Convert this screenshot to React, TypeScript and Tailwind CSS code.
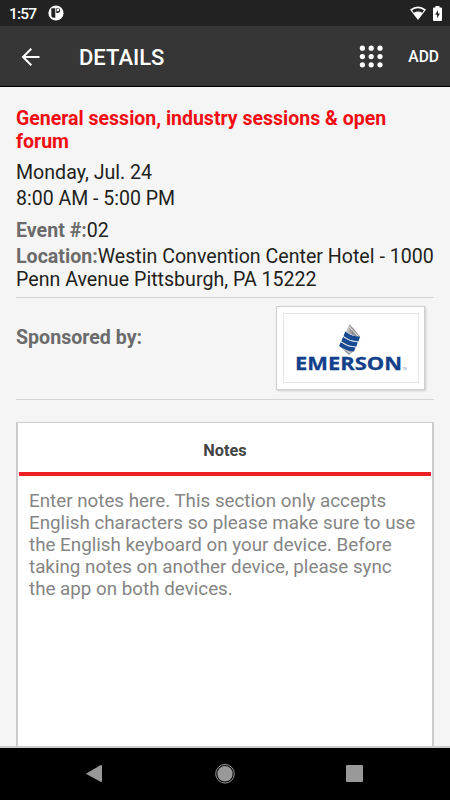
function StatusBar() {
  return (
    <div className="flex h-[26px] shrink-0 items-center bg-[#222222] pl-[9px] pr-[8px] text-white">
      <span className="w-[39px] pt-px text-[15.5px] font-medium leading-[26px] tracking-[-0.8px]">1:57</span>
      <svg width="16" height="16" viewBox="0 0 16 16">
        <circle cx="8" cy="8" r="7.6" fill="#fff" />
        <path d="M3.3 3.3h4v9.4h-1.5q-2.5 0-2.5-2.5z" fill="#222" />
        <path d="M8.3 3.2h1.5a2.4 2.4 0 0 1 0 4.8h-1.5z" fill="#222" />
        <circle cx="10" cy="5" r="1.2" fill="#fff" />
      </svg>
      <svg className="ml-auto" width="16" height="15" viewBox="0 0 16 15">
        <path d="M0 3.4Q8-2.6 16 3.4L8 14z" fill="#fff" />
        <path d="M2.1 4.3Q8 .3 13.9 4.3L12.3 6.8Q8 4 3.7 6.8z" fill="#222" />
      </svg>
      <svg className="ml-[7px]" width="9" height="15" viewBox="0 0 9 15">
        <path d="M2.5 0h4v1.5H8q1 0 1 1V14q0 1-1 1H1q-1 0-1-1V2.5q0-1 1-1h1.5z" fill="#fff" />
        <path d="M5 4L2.2 8.8h1.9V12.5L6.9 7.5H5z" fill="#222" />
      </svg>
    </div>
  );
}

function Header() {
  return (
    <header className="flex h-[61px] shrink-0 items-center border-b border-black bg-[#363636] pl-[21px] pr-[11px] text-white">
      <svg className="mt-[2px]" width="20" height="20" viewBox="0 0 20 20" fill="none" stroke="#fff" strokeWidth="2">
        <path d="M18.5 10H2M10.3 1.7L2 10l8.3 8.3" />
      </svg>
      <h1 className="ml-[38px] pt-[3px] text-[22px] font-medium leading-[60px]">DETAILS</h1>
      <svg className="ml-auto mt-[2px]" width="24" height="24" viewBox="0 0 24 24" fill="#fff">
        {[3.2, 11.6, 19.8].map((y) =>
          [3.4, 12.2, 21].map((x) => <circle key={`${x}-${y}`} cx={x} cy={y} r="2.6" />)
        )}
      </svg>
      <button className="ml-[25px] pt-[3px] text-[15.6px] font-medium">ADD</button>
    </header>
  );
}

function EmersonLogo() {
  return (
    <svg width="134" height="68" viewBox="0 0 134 68">
      <defs>
        <linearGradient id="silver" x1="0" y1="0" x2="1" y2="0">
          <stop offset="0" stopColor="#dadada" />
          <stop offset="0.5" stopColor="#8a8a8a" />
          <stop offset="1" stopColor="#b5b5b5" />
        </linearGradient>
      </defs>
      <path d="M65.5 10L76.3 22.5 75.8 24 61.5 18z" fill="url(#silver)" />
      <path d="M55 31.5L69.5 37.5 65 41z" fill="url(#silver)" />
      <path d="M65 12.5L74.5 22.5M57 33l9.5 6" stroke="#fff" strokeWidth="0.8" />
      <g fill="#174a91">
        <path d="M61.2 17.5q7 5.2 14.8 5.2L74.5 27.6q-8 0-15-5.4z" />
        <path d="M59 22.8q7 5.2 14.8 5.2L72.3 32.8q-8 0-15-5.4z" />
        <path d="M56.8 28q7 5.2 14.8 5.2L70 37.4q-8 0-15-5.4z" />
      </g>
      <path d="M59.3 22.6q7 5.3 14.8 5.3M57 27.8q7 5.3 14.8 5.3" fill="none" stroke="#e3e6ea" strokeWidth="0.9" />
      <text
        x="11"
        y="56"
        textLength="107"
        lengthAdjust="spacingAndGlyphs"
        fill="#12408a"
        stroke="#12408a"
        strokeWidth="0.3"
        fontFamily="Open Sans, sans-serif"
        fontWeight="700"
        fontSize="18"
      >
        EMERSON
      </text>
      <text x="118.5" y="56" fill="#7992bd" fontFamily="Liberation Sans, sans-serif" fontSize="3">
        TM
      </text>
    </svg>
  );
}

function SessionInfo() {
  return (
    <section className="whitespace-nowrap text-[19.6px] leading-[23px] text-[#231f20]">
      <h2 className="pt-px text-[19.5px] font-bold text-[#f20d12]">
        General session, industry sessions &amp; open
        <br />
        forum
      </h2>
      <p className="mt-[8px]">Monday, Jul. 24</p>
      <p className="mt-[3px] text-[19.5px]">8:00 AM - 5:00 PM</p>
      <p className="mt-[9px]">
        <b className="text-[#6b6b6b]">Event #:</b>02
      </p>
      <p className="mt-[3px]">
        <b className="text-[#6b6b6b]">Location:</b>Westin Convention Center Hotel - 1000
        <br />
        Penn Avenue Pittsburgh, PA 15222
      </p>
    </section>
  );
}

function Sponsor() {
  return (
    <section className="mt-[6px] flex h-[103px] justify-between border-y border-[#d5d5d5] pr-[9px] pt-[8px]">
      <b className="mt-[20px] text-[19.6px] leading-[23px] text-[#6b6b6b]">Sponsored by:</b>
      <div className="h-[84px] w-[149px] border border-[#cfcfcf] bg-white py-[6px] pl-[6px] pr-[5px] shadow-[1px_1px_2px_#cccccc]">
        <div className="h-full w-full border border-[#e5e5e5]">
          <EmersonLogo />
        </div>
      </div>
    </section>
  );
}

function Notes() {
  return (
    <section className="mt-[22px] flex-1 border-x-2 border-t border-[#cccccc] bg-white px-px">
      <h3 className="h-[49px] text-center text-[16.3px] font-bold leading-[55px] text-[#444444]">Notes</h3>
      <div className="h-[4px] bg-[#ed2025]" />
      <p className="whitespace-nowrap pl-[10px] pt-[14px] text-[18.8px] leading-[22px] text-[#858585]">
        Enter notes here. This section only accepts
        <br />
        English characters so please make sure to use
        <br />
        the English keyboard on your device. Before
        <br />
        taking notes on another device, please sync
        <br />
        the app on both devices.
      </p>
    </section>
  );
}

function NavBar() {
  return (
    <nav className="flex h-[52px] shrink-0 items-center justify-between bg-black pl-[85px] pr-[87px]">
      <svg width="18" height="20" viewBox="0 0 18 20" fill="#999">
        <path d="M.8 9.8L15.5 1.3q1.5-.8 1.5.5v15.5q0 1.3-1.5.5z" />
      </svg>
      <svg width="20" height="20" viewBox="0 0 20 20">
        <circle cx="10" cy="9.8" r="9.3" fill="none" stroke="#999" />
        <circle cx="10" cy="9.8" r="7.7" fill="#999" />
      </svg>
      <div className="mb-px h-[17px] w-[17px] rounded-[1px] bg-[#999999]" />
    </nav>
  );
}

export default function App() {
  return (
    <div className="flex h-[800px] w-[450px] flex-col overflow-hidden bg-[#f5f5f5] font-['Roboto',sans-serif]">
      <StatusBar />
      <Header />
      <main className="flex min-h-0 flex-1 flex-col border-b-2 border-[#cccccc] px-[16px] pt-[19px]">
        <SessionInfo />
        <Sponsor />
        <Notes />
      </main>
      <NavBar />
    </div>
  );
}
